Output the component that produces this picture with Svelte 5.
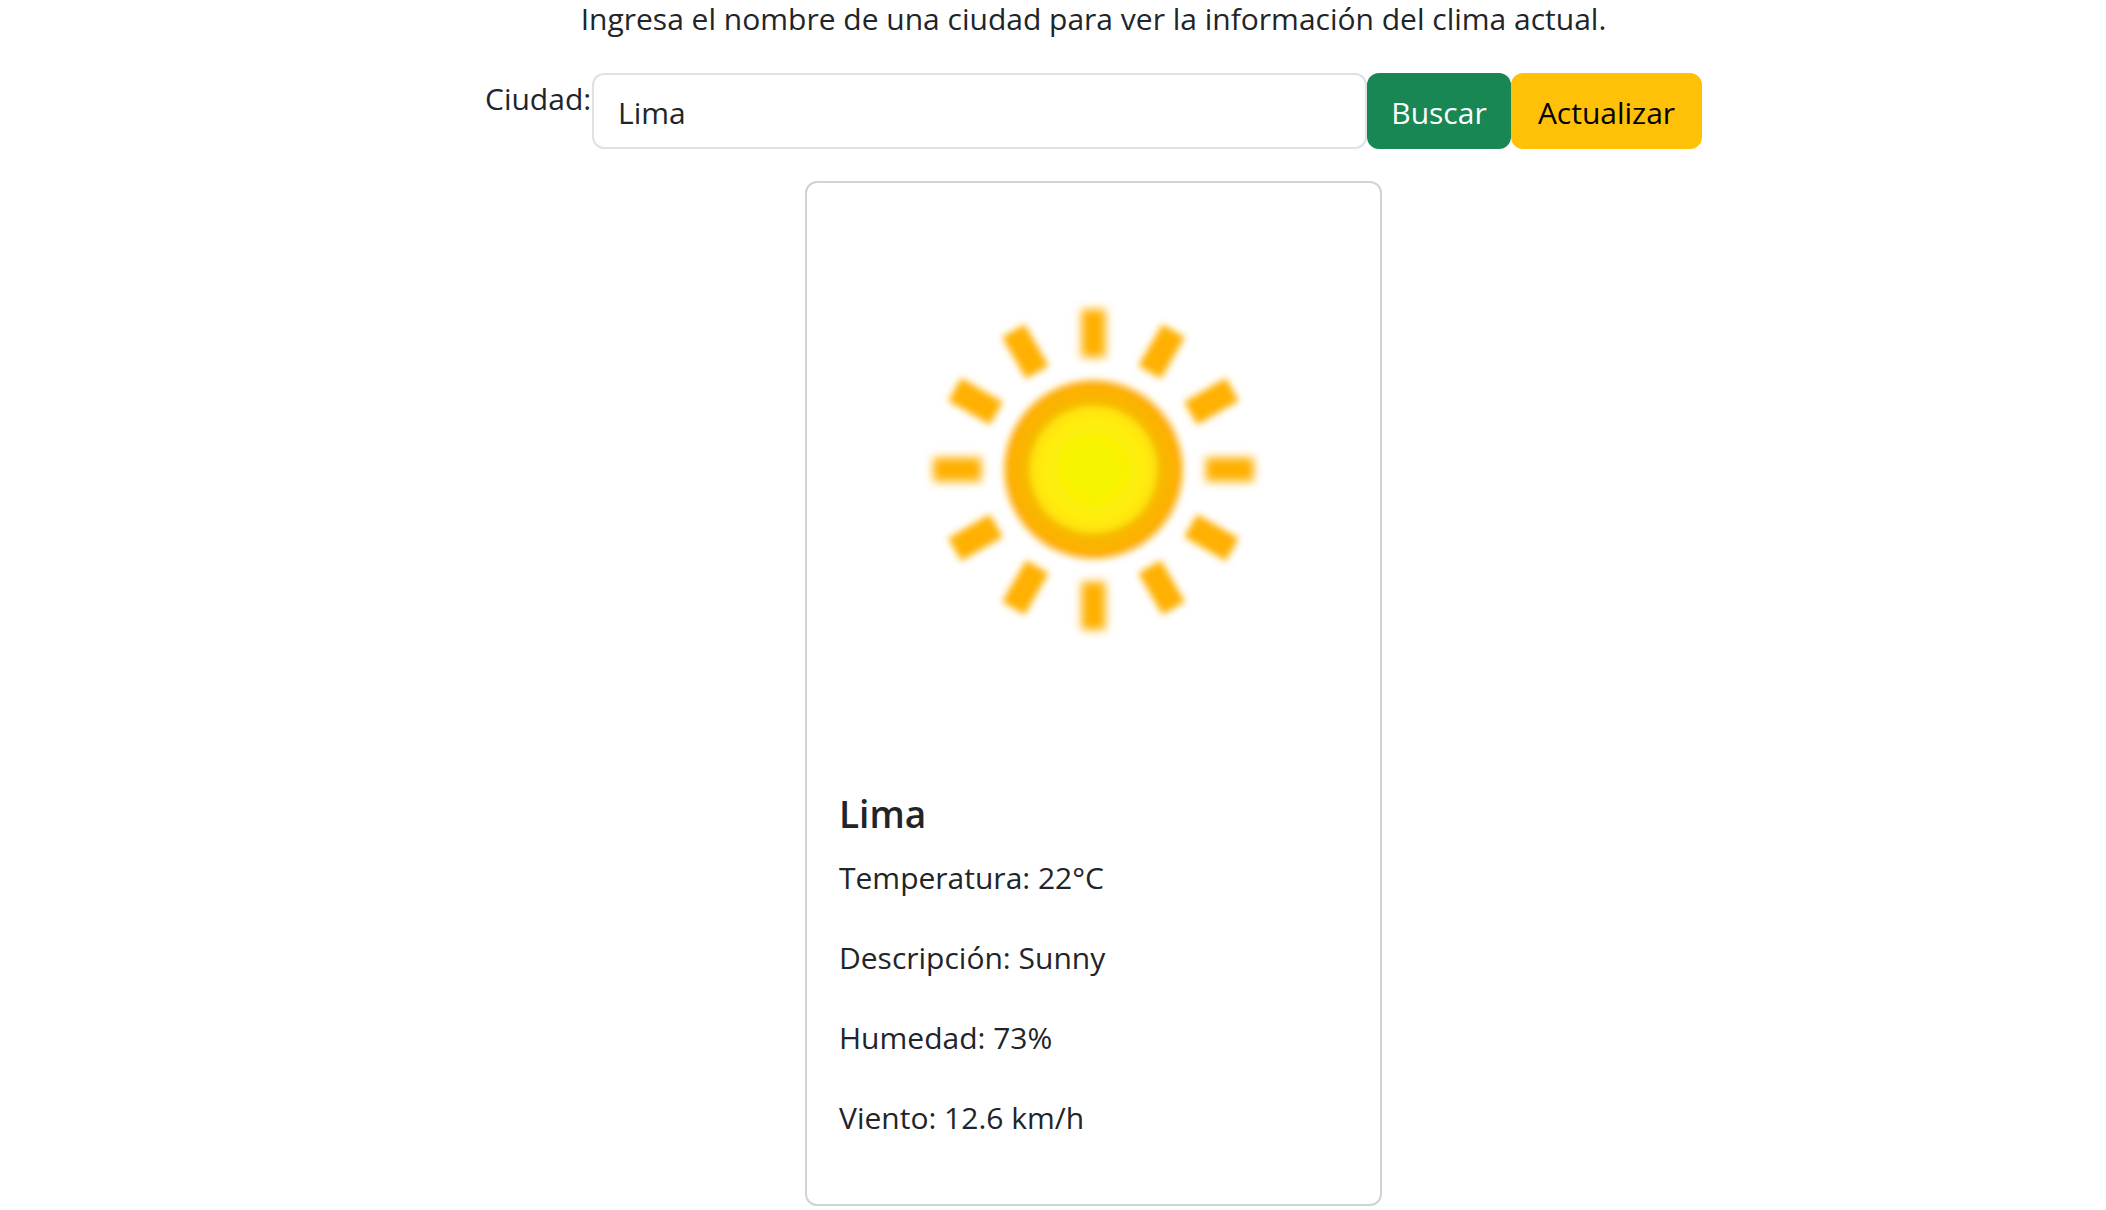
<script>
  let city = $state('Lima');
  const weather = $state({
    city: 'Lima',
    details: ['Temperatura: 22°C', 'Descripción: Sunny', 'Humedad: 73%', 'Viento: 12.6 km/h'],
  });
  const rays = Array.from({ length: 12 }, (_, i) => i * 30);

  function search(event) {
    event.preventDefault();
    weather.city = city;
  }
</script>

<main>
  <p class="intro">Ingresa el nombre de una ciudad para ver la información del clima actual.</p>

  <form onsubmit={search}>
    <label for="city">Ciudad:</label>
    <input id="city" type="text" bind:value={city} />
    <button class="search" type="submit">Buscar</button>
    <button class="refresh" type="button">Actualizar</button>
  </form>

  <article class="card">
    <svg viewBox="0 0 572 572" role="img" aria-label="Sunny">
      <defs>
        <filter id="soft" x="-10%" y="-10%" width="120%" height="120%">
          <feGaussianBlur stdDeviation="3.6" />
        </filter>
        <filter id="softer" filterUnits="userSpaceOnUse" x="0" y="0" width="572" height="572">
          <feGaussianBlur stdDeviation="5" />
        </filter>
        <radialGradient id="core">
          <stop offset="0.3" stop-color="#f5f500" />
          <stop offset="0.8" stop-color="#ffec0c" />
          <stop offset="1" stop-color="#ffe00a" />
        </radialGradient>
        <radialGradient id="ring">
          <stop offset="0.7" stop-color="#f3b800" />
          <stop offset="0.86" stop-color="#fbb400" />
          <stop offset="1" stop-color="#ffa90c" />
        </radialGradient>
      </defs>
      {#each rays as angle}
        <g filter={angle % 90 === 0 ? 'url(#softer)' : 'url(#soft)'}>
          <rect
            x={angle % 90 === 0 ? 274 : 273}
            y="126"
            width={angle % 90 === 0 ? 24 : 26}
            height="48"
            fill="#ffb000"
            transform="rotate({angle} 286 286)"
          />
        </g>
      {/each}
      <g filter="url(#soft)">
        <circle cx="286" cy="286" r="89" fill="url(#ring)" />
        <circle cx="286" cy="286" r="64" fill="url(#core)" />
      </g>
    </svg>
    <div class="body">
      <h5>{weather.city}</h5>
      {#each weather.details as detail}
        <p>{detail}</p>
      {/each}
    </div>
  </article>
</main>

<style>
  :global(body) {
    margin: 0;
    background: #fff;
  }

  main {
    display: flex;
    flex-direction: column;
    align-items: center;
    padding-left: 81px;
    color: #212529;
    font: 400 30px/52px 'Open Sans', 'Noto Sans', sans-serif;
  }

  .intro {
    margin: 0 0 35px;
    line-height: 38px;
  }

  form {
    display: flex;
    width: 100%;
    max-width: 1217px;
    margin-bottom: 32px;
  }

  label {
    min-width: 107px;
  }

  input,
  button {
    box-sizing: border-box;
    height: 76px;
    margin: 0;
    border: 2px solid;
    border-radius: 12px;
    padding: 14px 0 10px;
    font: inherit;
    line-height: 48px;
  }

  input {
    flex: 1;
    min-width: 0;
    padding: 12px 24px 10px;
    border-color: #dee2e6;
    background: #fff;
    color: #212529;
  }

  .search {
    min-width: 144px;
    border-color: #198754;
    background: #198754;
    color: #fff;
  }

  .refresh {
    min-width: 191px;
    border-color: #ffc107;
    background: #ffc107;
    color: #000;
  }

  .card {
    box-sizing: border-box;
    width: 100%;
    max-width: 577px;
    border: 2px solid #d2d2d3;
    border-radius: 12px;
  }

  svg {
    display: block;
    width: 100%;
  }

  .body {
    padding: 32px;
  }

  h5 {
    margin: 0 0 12px;
    font-size: 37px;
    font-weight: 600;
    line-height: 52px;
  }

  .body p {
    margin: 0 0 28px;
  }
</style>
